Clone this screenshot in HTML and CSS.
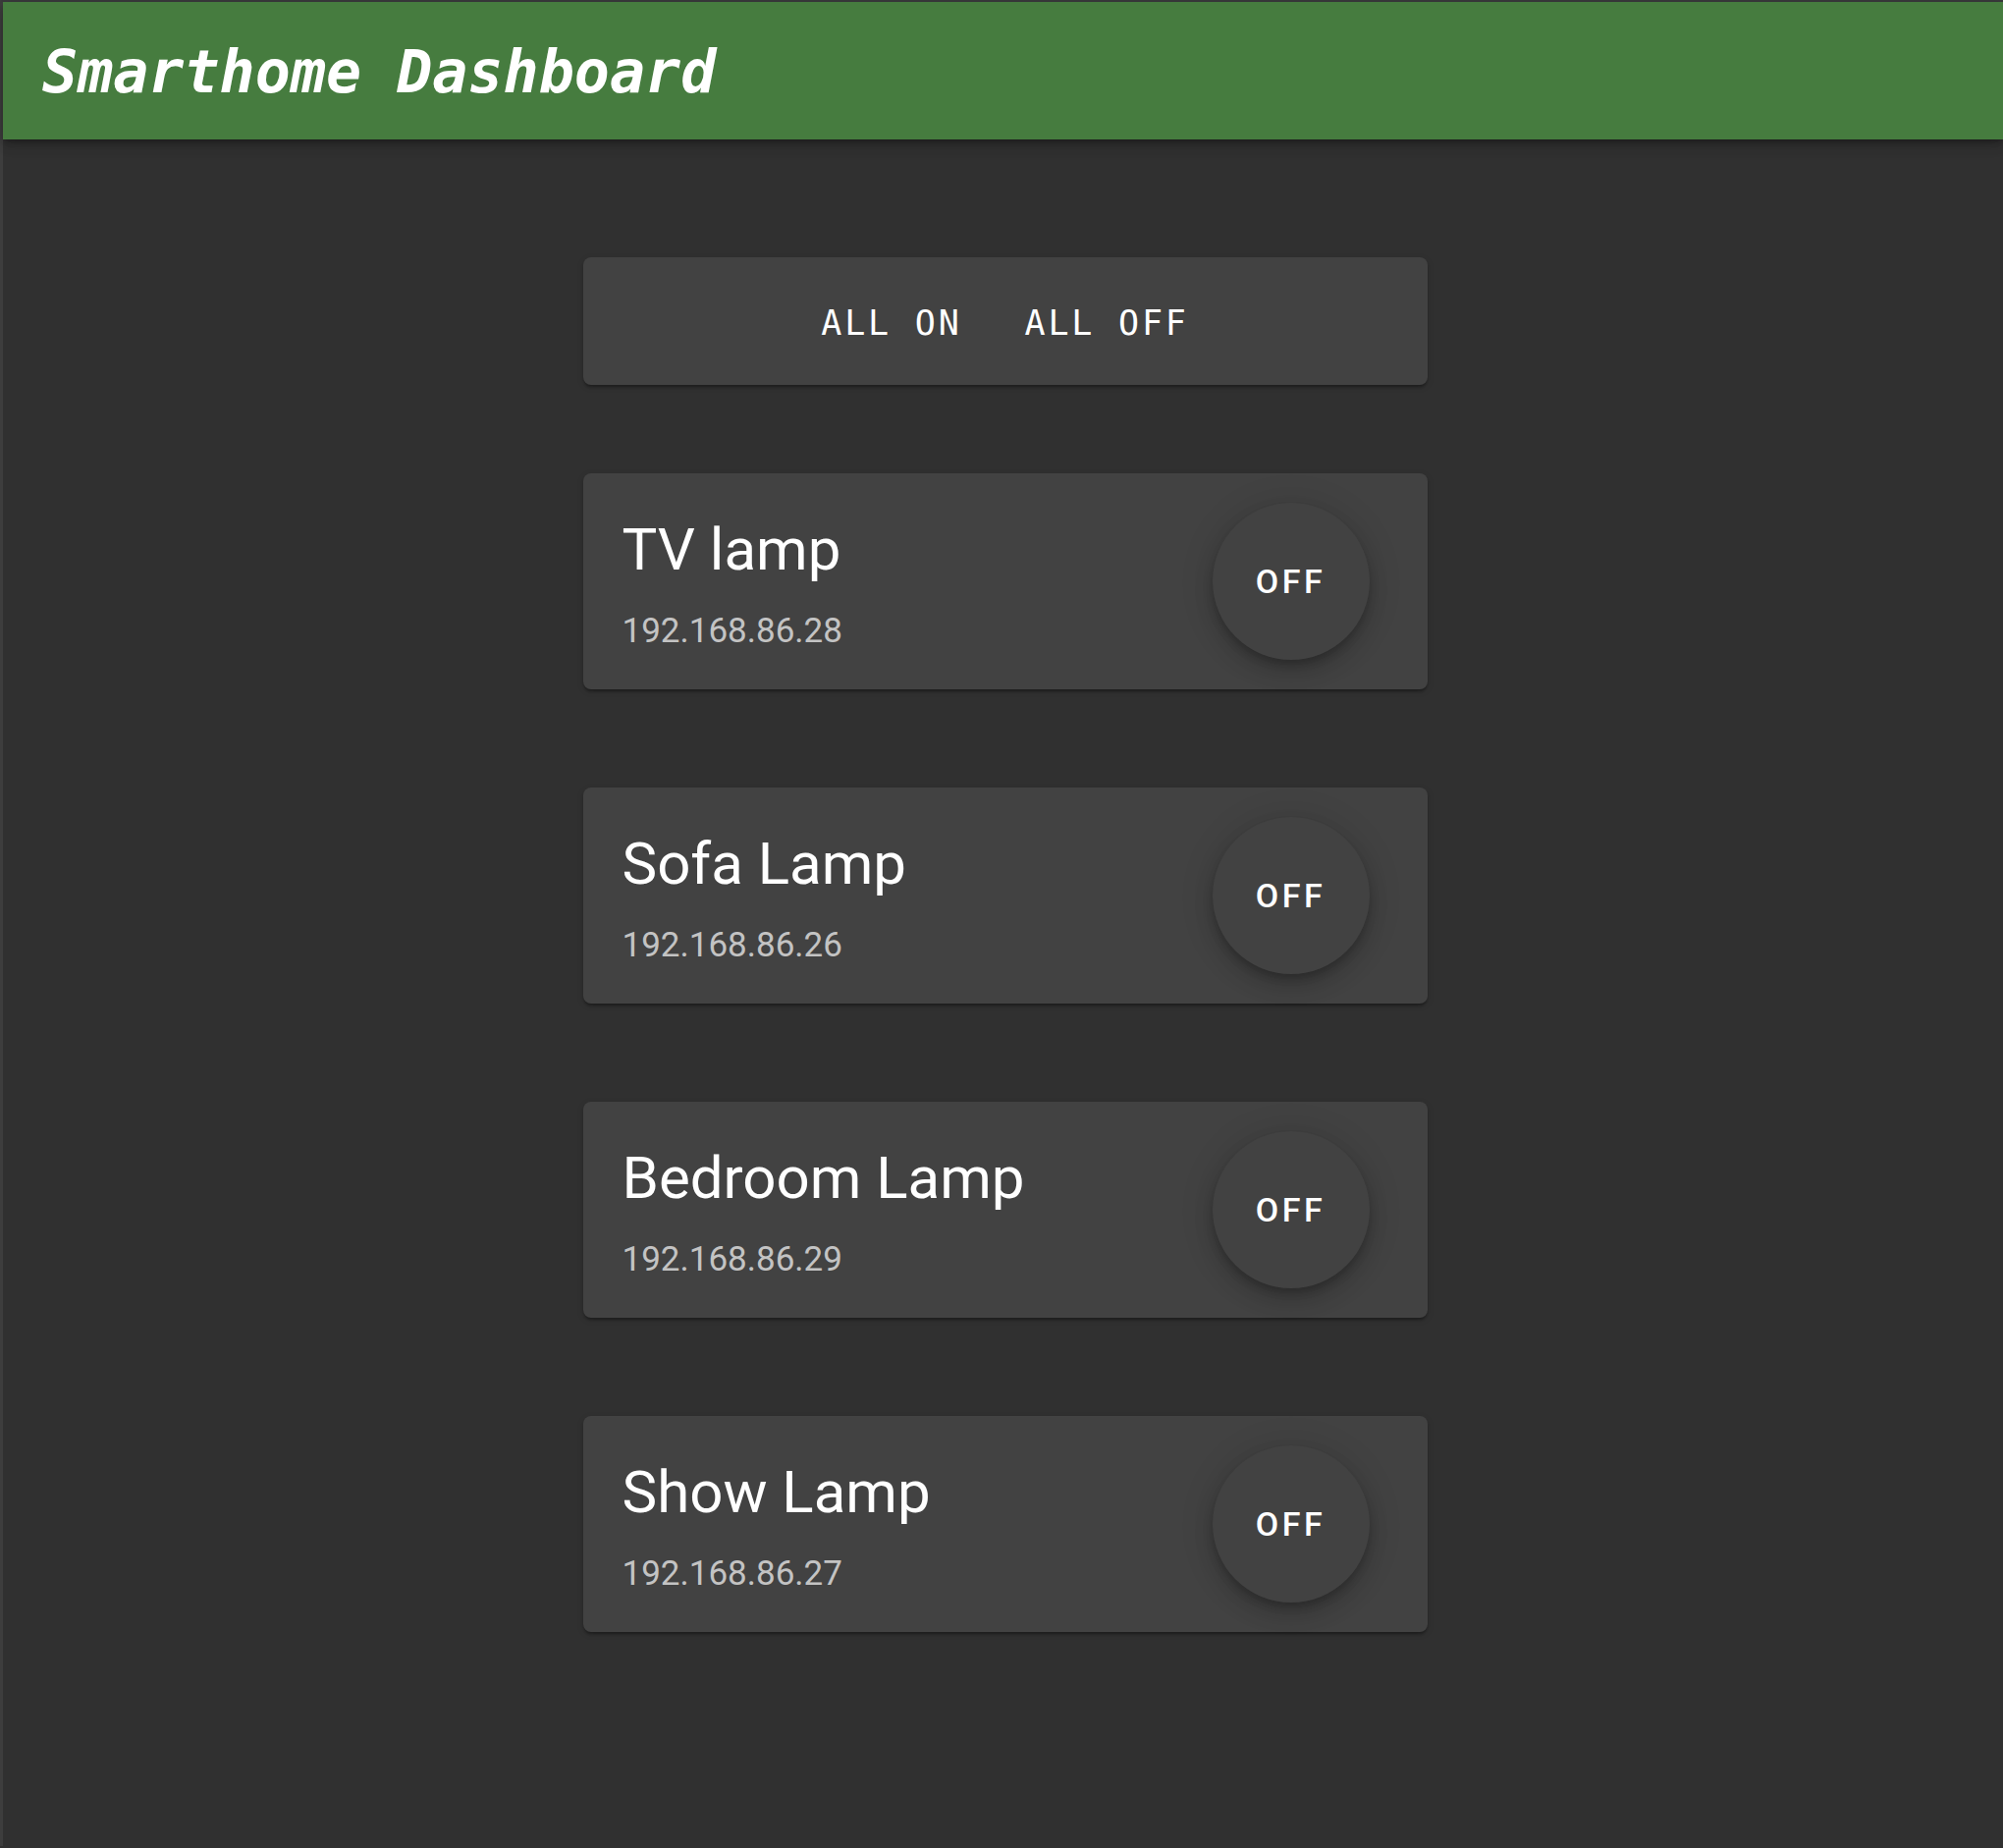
FILE: index.html
```html
<!DOCTYPE html>
<html lang="en">
<head>
<meta charset="utf-8">
<title>Smarthome Dashboard</title>
<link rel="stylesheet" href="styles.css">
</head>
<body>
<div class="frame">
  <header class="toolbar">
    <h1 class="brand">Smarthome Dashboard</h1>
  </header>
  <main class="content">
    <section class="card master">
      <button class="text-btn">ALL ON</button>
      <button class="text-btn">ALL OFF</button>
    </section>
    <section class="card lamp">
      <div class="lamp-info">
        <div class="lamp-name">TV lamp</div>
        <div class="lamp-ip">192.168.86.28</div>
      </div>
      <button class="fab">OFF</button>
    </section>
    <section class="card lamp">
      <div class="lamp-info">
        <div class="lamp-name">Sofa Lamp</div>
        <div class="lamp-ip">192.168.86.26</div>
      </div>
      <button class="fab">OFF</button>
    </section>
    <section class="card lamp">
      <div class="lamp-info">
        <div class="lamp-name">Bedroom Lamp</div>
        <div class="lamp-ip">192.168.86.29</div>
      </div>
      <button class="fab">OFF</button>
    </section>
    <section class="card lamp">
      <div class="lamp-info">
        <div class="lamp-name">Show Lamp</div>
        <div class="lamp-ip">192.168.86.27</div>
      </div>
      <button class="fab">OFF</button>
    </section>
  </main>
</div>
</body>
</html>
```
FILE: styles.css
```css
html, body {
  margin: 0;
  padding: 0;
  background: #303030;
}
body {
  font-family: Roboto, "Liberation Sans", sans-serif;
  color: #ffffff;
}
.frame {
  min-height: 1880px;
  border-top: 2px solid #3a3a3c;
  border-left: 3px solid #3d3d3d;
  background: #303030;
  box-sizing: border-box;
}
.toolbar {
  height: 140px;
  background: #467c3f;
  display: flex;
  align-items: center;
  padding-left: 40px;
  box-shadow: 0 4px 5px -2px rgba(0,0,0,.25), 0 6px 10px rgba(0,0,0,.14), 0 2px 18px rgba(0,0,0,.12);
  position: relative;
  z-index: 1;
}
.brand {
  margin: 0;
  font-family: "DejaVu Sans Mono", monospace;
  font-weight: bold;
  font-style: italic;
  font-size: 60px;
  line-height: 1;
  color: #ffffff;
  padding-top: 2px;
}
.content {
  display: flex;
  flex-direction: column;
  align-items: center;
  padding: 120px 0 0 4px;
}
.card {
  width: 860px;
  box-sizing: border-box;
  background: #424242;
  border-radius: 8px;
  box-shadow: 0 4px 3px -2px rgba(0,0,0,.2), 0 2px 2px rgba(0,0,0,.14), 0 2px 7px rgba(0,0,0,.12);
}
.master {
  height: 130px;
  display: flex;
  align-items: center;
  justify-content: center;
  gap: 64px;
  padding-top: 5px;
  margin-bottom: 90px;
}
.text-btn {
  background: none;
  border: 0;
  padding: 0;
  margin: 0;
  color: #ffffff;
  font-family: "DejaVu Sans Mono", monospace;
  font-size: 35px;
  letter-spacing: 2.8px;
  line-height: 1;
  cursor: pointer;
}
.lamp {
  display: flex;
  align-items: center;
  justify-content: space-between;
  padding: 30px 59px 30px 40px;
  margin-bottom: 100px;
}
.lamp-info {
  align-self: stretch;
  padding-top: 12px;
}
.lamp-name {
  font-size: 60px;
  line-height: 72px;
  margin-bottom: 27px;
}
.lamp-ip {
  font-size: 35px;
  line-height: 40px;
  color: rgba(255,255,255,.7);
}
.fab {
  width: 160px;
  height: 160px;
  border-radius: 50%;
  border: 0;
  background: #424242;
  color: #ffffff;
  font-family: Roboto, "Liberation Sans", sans-serif;
  font-weight: 500;
  font-size: 34px;
  letter-spacing: 3.5px;
  padding: 0;
  box-shadow: 0 6px 10px -2px rgba(0,0,0,.2), 0 12px 20px rgba(0,0,0,.14), 0 2px 36px rgba(0,0,0,.12);
  cursor: pointer;
}
```
